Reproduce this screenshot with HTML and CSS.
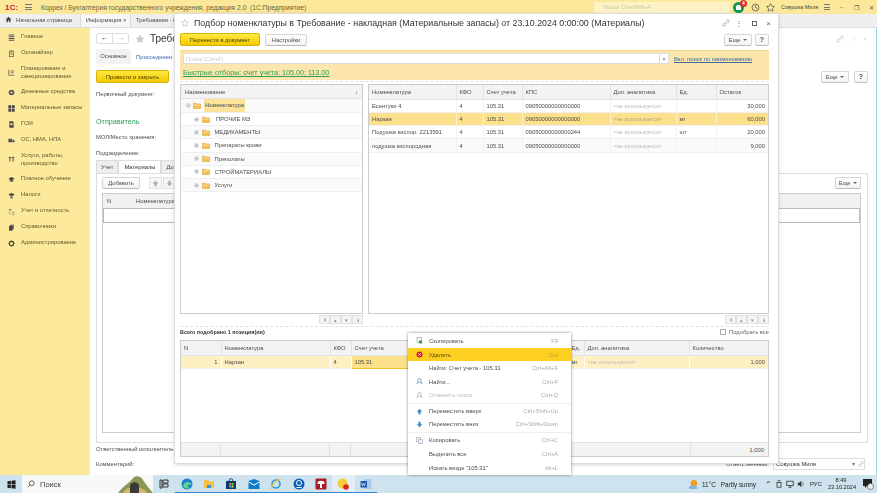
FILE: index.html
```html
<!DOCTYPE html>
<html lang="ru">
<head>
    <meta charset="UTF-8">
    <title>Подбор номенклатуры</title>
    <link rel="stylesheet" href="styles.css">
</head>
<body>
    <svg class="sprite" xmlns="http://www.w3.org/2000/svg">
        <symbol id="folder" viewBox="0 0 10 9"><path d="M0.5 1.5h3l1 1h5v6h-9z" fill="#f3c14f" stroke="#d99a2b" stroke-width=".7"/><path d="M1 4h8" stroke="#fff2c4" stroke-width=".8"/></symbol>
        <symbol id="plus" viewBox="0 0 7 7"><circle cx="3.5" cy="3.5" r="3" fill="#e8e8e8" stroke="#b5b5b5" stroke-width=".6"/><path d="M2 3.5h3M3.5 2v3" stroke="#777" stroke-width=".7"/></symbol>
        <symbol id="minus" viewBox="0 0 7 7"><circle cx="3.5" cy="3.5" r="3" fill="#e8e8e8" stroke="#b5b5b5" stroke-width=".6"/><path d="M2 3.5h3" stroke="#777" stroke-width=".7"/></symbol>
        <symbol id="star" viewBox="0 0 10 10"><path d="M5 .6l1.35 2.9 3.1.4-2.3 2.1.6 3.1L5 7.55 2.25 9.1l.6-3.1L.55 3.9l3.1-.4z"/></symbol>
        <symbol id="chain" viewBox="0 0 10 10"><g fill="none" stroke="#999" stroke-width=".9"><path d="M4.6 3.2l1.6-1.6a1.5 1.5 0 0 1 2.2 2.2L6.800 5.400"/><path d="M5.400 6.800L3.800 8.400a1.500 1.500 0 0 1-2.200-2.200l1.600-1.600"/><path d="M3.800 6.200l2.400-2.400"/></g></symbol>
        <symbol id="up" viewBox="0 0 10 10"><path d="M5 1l4 4.2H6.6V9H3.4V5.2H1z"/></symbol>
        <symbol id="down" viewBox="0 0 10 10"><path d="M5 9L1 4.8h2.4V1h3.2v3.8H9z"/></symbol>
        <symbol id="gear" viewBox="0 0 10 10"><circle cx="5" cy="5" r="3" fill="none" stroke="#4a4a3a" stroke-width="1.6"/><path d="M5 .3v1.6M5 8.1v1.6M.3 5h1.6M8.1 5h1.6M1.7 1.7l1.1 1.1M7.2 7.2l1.1 1.1M8.3 1.7L7.2 2.8M2.8 7.2L1.7 8.3" stroke="#4a4a3a" stroke-width="1"/></symbol>
        <symbol id="copies" viewBox="0 0 10 10"><rect x=".8" y=".8" width="5.5" height="6" fill="#fff" stroke="#99a" stroke-width=".8"/><rect x="3.7" y="3.2" width="5.5" height="6" fill="#eef" stroke="#99a" stroke-width=".8"/></symbol>
        <symbol id="finder" viewBox="0 0 10 10"><circle cx="5" cy="3.6" r="2.7" fill="none" stroke="currentColor" stroke-width="1.1"/><path d="M3 5.7L.9 8.8M7 5.7l2.1 3.1" stroke="currentColor" stroke-width="1.2"/></symbol>
    </svg>

    <header class="app-title">
        <span class="logo">1С:</span>
        <span class="burger"></span>
        <span class="app-name">Коррек / Бухгалтерия государственного учреждения, редакция 2.0&nbsp; (1С:Предприятие)</span>
        <div class="global-search">Поиск Ctrl+Shift+F</div>
        <span class="bell"><b>4</b></span>
        <svg class="top-icon history" viewBox="0 0 10 10"><circle cx="5" cy="5" r="3.8" fill="none" stroke="#555" stroke-width=".9"/><path d="M5 2.6V5l1.8 1" fill="none" stroke="#555" stroke-width=".9"/></svg>
        <svg class="top-icon star-line" viewBox="0 0 10 10"><use href="#star"/></svg>
        <span class="user">Совушка Миля</span>
        <span class="burger small"></span>
        <span class="win-btn">&#8211;</span>
        <span class="win-btn">&#10064;</span>
        <span class="win-btn">&#10005;</span>
    </header>

    <nav class="tabs">
        <span class="tab home"><svg class="home-icon" viewBox="0 0 10 10"><path d="M5 1L.8 5h1.4v4h2V6.400h1.600V9h2V5h1.400z" fill="#444"/></svg>Начальная страница</span>
        <span class="tab info">Информация <i>&times;</i></span>
        <span class="tab req">Требования - н</span>
    </nav>

    <div class="main">
        <aside class="sidebar">
            <div class="side-item"><svg viewBox="0 0 10 10"><path d="M1 1.500h8M1 4h8M1 6.500h8M1 9h8" stroke="#555" stroke-width="1.600"/></svg>Главное</div>
            <div class="side-item"><svg viewBox="0 0 10 10"><rect x="2" y="1.500" width="6" height="8" fill="none" stroke="#555"/><path d="M3.500 4h3M3.500 6h3M4 1h2" stroke="#555"/></svg>Органайзер</div>
            <div class="side-item tall"><svg viewBox="0 0 10 10"><path d="M1 1v8h8" fill="none" stroke="#555"/><circle cx="6" cy="4" r="2" fill="none" stroke="#555"/></svg>Планирование и санкционирование</div>
            <div class="side-item"><svg viewBox="0 0 10 10"><circle cx="5" cy="5" r="4" fill="#555"/><circle cx="5" cy="5" r="1.500" fill="#fde99b"/></svg>Денежные средства</div>
            <div class="side-item"><svg viewBox="0 0 10 10"><path d="M.5 .5h4v4h-4zM5.500 .5h4v4h-4zM.5 5.500h4v4h-4zM5.500 5.500h4v4h-4z" fill="#444"/></svg>Материальные запасы</div>
            <div class="side-item"><svg viewBox="0 0 10 10"><path d="M2 .5h5l1 1.500v7.500H2z" fill="#444"/><rect x="3.500" y="3" width="3" height="3" fill="#fde99b"/></svg>ГСМ</div>
            <div class="side-item"><svg viewBox="0 0 10 10"><path d="M.5 2.500h5.500v5H.5zM6.500 4h2l1 1.500v2h-3z" fill="#555"/></svg>ОС, НМА, НПА</div>
            <div class="side-item tall"><svg viewBox="0 0 10 10"><path d="M1 2h3.500M2.700 2v6M5.500 2h3.500M7.200 2v6" stroke="#444" stroke-width="1.300"/></svg>Услуги, работы, производство</div>
            <div class="side-item"><svg viewBox="0 0 10 10"><path d="M5 1.500L.5 4 5 6.500 9.500 4z" fill="#444"/><path d="M2.500 6v2h5V6" fill="#444"/></svg>Платное обучение</div>
            <div class="side-item"><svg viewBox="0 0 10 10"><path d="M1 2l2 1 2-2 2 2 2-1-1 3.500H2z" fill="#444"/><path d="M3.500 6.500h3V9h-3z" fill="#444"/></svg>Налоги</div>
            <div class="side-item"><svg viewBox="0 0 10 10"><path d="M1 3h4M3 1v2M6 6h3M6 9h3M1 6l3 3" stroke="#444" stroke-width=".9"/></svg>Учет и отчетность</div>
            <div class="side-item"><svg viewBox="0 0 10 10"><path d="M3.500 .8h5v7h-5z" fill="#777"/><path d="M1.500 2.500h5v7h-5z" fill="#444"/></svg>Справочники</div>
            <div class="side-item"><svg viewBox="0 0 10 10"><use href="#gear"/></svg>Администрирование</div>
        </aside>

        <section class="doc">
            <div class="doc-head">
                <div class="nav-btns"><span>&#8592;</span><span class="off">&#8594;</span></div>
                <svg class="doc-star" viewBox="0 0 10 10"><use href="#star"/></svg>
                <h1 class="doc-title">Требо</h1>
                <div class="doc-tools"><svg viewBox="0 0 10 10"><use href="#chain"/></svg><span>&#8942;</span><span>&times;</span></div>
            </div>
            <div class="doc-links"><span class="doc-link-on">Основное</span><span class="doc-link">Присоединен</span></div>
            <div class="doc-actions">
                <button class="btn-yellow">Провести и закрыть</button>
                <div class="right-btns"><button class="btn">Еще <i class="caret"></i></button><button class="btn help">?</button></div>
            </div>
            <div class="field first">Первичный документ:</div>
            <div class="doc-section">Отправитель</div>
            <div class="field">МОЛ/Место хранения:</div>
            <div class="field next">Подразделение:</div>
            <div class="doc-tabs">
                <span class="doc-tab">Учет</span><span class="doc-tab on">Материалы</span><span class="doc-tab">Доп</span>
            </div>
            <div class="tab-panel">
                <div class="panel-tools">
                    <button class="btn add">Добавить</button>
                    <span class="arrow-btns"><span><svg viewBox="0 0 10 10"><use href="#up"/></svg></span><span><svg viewBox="0 0 10 10"><use href="#down"/></svg></span></span>
                    <button class="btn more">Еще <i class="caret"></i></button>
                </div>
                <div class="doc-table">
                    <div class="doc-table-head"><span class="n">N</span><span>Номенклатура</span></div>
                    <div class="doc-table-row"></div>
                </div>
            </div>
            <div class="doc-bottom">
                <div class="field resp">Ответственный исполнитель:</div>
                <div class="comment-row">
                    <span>Комментарий:</span>
                    <span class="resp-right">Ответственный:<span class="resp-input">Совушка Миля<i>&#9662;</i><svg viewBox="0 0 10 10"><use href="#chain"/></svg></span></span>
                </div>
            </div>
        </section>
    </div>

    <footer class="taskbar">
        <svg class="win-logo" viewBox="0 0 10 10"><path d="M.5 1.500l3.800-.6v3.800H.5zM5 .8L9.500 .2v4.500H5zM.5 5.300h3.800v3.800L.5 8.500zM5 5.300h4.500v4.500L5 9.200z" fill="#222"/></svg>
        <div class="task-search">
            <svg viewBox="0 0 10 10"><circle cx="6" cy="4" r="3" fill="none" stroke="#444"/><path d="M3.800 6.200L1 9" stroke="#444"/></svg>
            <span>Поиск</span>
            <svg class="hill" viewBox="0 0 35 18"><path d="M0 18C6 10 12 8 15 3c3-3 8-2 10 2 3 5 7 9 10 13z" fill="#8a9a55"/><path d="M12 18v-7c0-5 9-5 9 0v7z" fill="#3b3b35"/><path d="M5 18c2-4 5-5 7-5v5zM21 13c3 0 6 2 8 5h-8z" fill="#d4b870"/></svg>
        </div>
        <div class="task-icons">
            <span class="task-icon"><svg viewBox="0 0 12 12"><path d="M2 2h2v8H2zM5 2h5v3H5zM5 6h5v3H5z" fill="none" stroke="#333"/></svg></span>
            <span class="task-icon open"><svg viewBox="0 0 12 12"><circle cx="6" cy="6" r="5.500" fill="#1b7fd0"/><path d="M2 8c1-5 8-5 9-1-2-1-5-1-4 2 1 1 3 1 3 1-4 2-7 0-8-2z" fill="#5fd38a"/></svg></span>
            <span class="task-icon open"><svg viewBox="0 0 12 12"><path d="M1 2h4l1 1.500h5V10H1z" fill="#f6c244"/><path d="M4 7h4v3H4z" fill="#3a8fd6"/></svg></span>
            <span class="task-icon open"><svg viewBox="0 0 12 12"><path d="M1 3h10v8H1z" fill="#0f3a66"/><path d="M4 3c0-3 4-3 4 0" fill="none" stroke="#0f3a66"/><path d="M4 5h2v2H4z" fill="#e55"/><path d="M6.500 5h2v2h-2z" fill="#6c4"/><path d="M4 7.500h2v2H4z" fill="#3bd"/><path d="M6.500 7.500h2v2h-2z" fill="#fc3"/></svg></span>
            <span class="task-icon open"><svg viewBox="0 0 12 12"><path d="M.5 3l5.500-2 5.500 2v8H.5z" fill="#0f7cc9"/><path d="M.5 4L6 7l5.500-3" fill="none" stroke="#fff"/></svg></span>
            <span class="task-icon open"><svg viewBox="0 0 12 12"><circle cx="6" cy="6" r="4" fill="none" stroke="#2f9be0" stroke-width="1.600"/><path d="M1 11c1-5 5-9 10-10" fill="none" stroke="#f2c230" stroke-width="1.100"/></svg></span>
            <span class="task-icon open"><svg viewBox="0 0 12 12"><circle cx="6" cy="6" r="5.500" fill="#0a62b8"/><circle cx="6" cy="5" r="2.500" fill="none" stroke="#fff"/><path d="M3.500 9.500h5" stroke="#fff"/></svg></span>
            <span class="task-icon open"><svg viewBox="0 0 12 12"><rect x=".5" y=".5" width="11" height="11" rx="1" fill="#a91d2a"/><path d="M2.500 5c0-3 7-3 7 0v1h-7zM5 6h2v4H5z" fill="#fff"/></svg></span>
            <span class="task-icon active"><svg viewBox="0 0 12 12"><circle cx="5.500" cy="5.500" r="5" fill="#f5cf3b"/><circle cx="9" cy="9" r="2.800" fill="#dd2222"/></svg></span>
            <span class="task-icon open"><svg viewBox="0 0 12 12"><path d="M4 1h7.500v10H4z" fill="#a9c8ee"/><path d="M.5 3h6.500v6.500H.5z" fill="#1a56a8"/><path d="M1.500 4.500l1 3.500 1-2.500 1 2.500 1-3.500" fill="none" stroke="#fff" stroke-width=".6"/></svg></span>
        </div>
        <div class="tray">
            <svg class="weather" viewBox="0 0 12 12"><circle cx="6.500" cy="4.500" r="3.500" fill="#f59a23"/><path d="M1 10c0-3 3-4 5-2 2-1 5 0 4 3H2z" fill="#7cb4e6"/></svg>
            <span class="temp">11°C</span>
            <span class="sunny">Partly sunny</span>
            <span class="chev">&#8963;</span>
            <svg class="tray-icon" viewBox="0 0 10 10"><rect x="2.500" y="3" width="5" height="6" fill="none" stroke="#333"/><path d="M3 1h4" stroke="#333"/></svg>
            <svg class="tray-icon" viewBox="0 0 10 10"><rect x="1" y="1.500" width="8" height="5.500" fill="none" stroke="#333"/><path d="M5 7v2M3 9h4" stroke="#333"/></svg>
            <svg class="tray-icon" viewBox="0 0 10 10"><path d="M1 3.500h2L5.500 1v8L3 6.500H1z" fill="#333"/><path d="M7 3c1 1 1 3 0 4" fill="none" stroke="#333" stroke-width=".8"/></svg>
            <span class="lang">РУС</span>
            <span class="clock">8:49<br>23.10.2024</span>
            <span class="notif"><svg viewBox="0 0 12 12"><path d="M1 1h9v7H5L3 10V8H1z" fill="#222"/><circle cx="8.500" cy="8.500" r="3" fill="#eee" stroke="#444" stroke-width=".6"/></svg></span>
        </div>
    </footer>

    <!-- окно подбора поверх документа -->
    <div class="picker">
        <div class="picker-head">
            <svg class="picker-star" viewBox="0 0 10 10"><use href="#star"/></svg>
            <h2 class="picker-title">Подбор номенклатуры в Требование - накладная (Материальные запасы) от 23.10.2024 0:00:00 (Материалы)</h2>
            <div class="picker-tools"><svg viewBox="0 0 10 10"><use href="#chain"/></svg><span>&#8942;</span><span class="box"></span><span>&times;</span></div>
        </div>
        <div class="picker-actions">
            <button class="btn-yellow move">Перенести в документ</button>
            <button class="btn settings">Настройки</button>
            <div class="right-btns"><button class="btn">Еще <i class="caret"></i></button><button class="btn help">?</button></div>
        </div>
        <div class="filter-panel">
            <div class="filter-top">
                <div class="filter-search">Поиск (Ctrl+F)<i>&times;</i></div>
                <span class="filter-link">Вкл. поиск по наименованию</span>
            </div>
            <div class="filter-quick">Быстрые отборы: счет учета: 105.00; 113.00</div>
        </div>
        <div class="dotted top"></div>
        <div class="lists">
            <div class="list-col tree-col">
                <div class="grid-box">
                    <div class="tree-head">Наименование<span>&#8595;</span></div>
                    <div class="tree-row root"><svg class="ex" viewBox="0 0 7 7"><use href="#minus"/></svg><svg class="fld" viewBox="0 0 10 9"><use href="#folder"/></svg><span class="sel">Номенклатура</span></div>
                    <div class="tree-row"><svg class="ex" viewBox="0 0 7 7"><use href="#plus"/></svg><svg class="fld" viewBox="0 0 10 9"><use href="#folder"/></svg>&nbsp;ПРОЧИЕ МЗ</div>
                    <div class="tree-row"><svg class="ex" viewBox="0 0 7 7"><use href="#plus"/></svg><svg class="fld" viewBox="0 0 10 9"><use href="#folder"/></svg>МЕДИКАМЕНТЫ</div>
                    <div class="tree-row"><svg class="ex" viewBox="0 0 7 7"><use href="#plus"/></svg><svg class="fld" viewBox="0 0 10 9"><use href="#folder"/></svg>Препараты крови</div>
                    <div class="tree-row"><svg class="ex" viewBox="0 0 7 7"><use href="#plus"/></svg><svg class="fld" viewBox="0 0 10 9"><use href="#folder"/></svg>Преполаты</div>
                    <div class="tree-row"><svg class="ex" viewBox="0 0 7 7"><use href="#plus"/></svg><svg class="fld" viewBox="0 0 10 9"><use href="#folder"/></svg>СТРОЙМАТЕРИАЛЫ</div>
                    <div class="tree-row"><svg class="ex" viewBox="0 0 7 7"><use href="#plus"/></svg><svg class="fld" viewBox="0 0 10 9"><use href="#folder"/></svg>Услуги</div>
                </div>
                <div class="pager"><span>&#8607;</span><span>&#9652;</span><span>&#9662;</span><span>&#8609;</span></div>
            </div>
            <div class="list-col goods-col">
                <div class="grid-box">
                    <table class="grid goods">
                        <colgroup><col class="c-name"><col class="c-kfo"><col class="c-acc"><col class="c-kps"><col class="c-an"><col class="c-ed"><col></colgroup>
                        <tr><th>Номенклатура</th><th>КФО</th><th>Счет учета</th><th>КПС</th><th>Доп. аналитика</th><th>Ед.</th><th>Остаток</th></tr>
                        <tr><td>Есентуки 4</td><td>4</td><td>105.31</td><td>09050000000000000</td><td class="muted">&lt;не используется&gt;</td><td></td><td class="num">30,000</td></tr>
                        <tr class="hl"><td>Нарзан</td><td>4</td><td>105.31</td><td>09050000000000000</td><td class="muted">&lt;не используется&gt;</td><td>мг</td><td class="num">60,000</td></tr>
                        <tr><td>Подушка кислор. 2213591</td><td>4</td><td>105.31</td><td>09050000000000244</td><td class="muted">&lt;не используется&gt;</td><td>шт</td><td class="num">20,000</td></tr>
                        <tr><td>подушка кислородная</td><td>4</td><td>105.31</td><td>09050000000000000</td><td class="muted">&lt;не используется&gt;</td><td></td><td class="num">9,000</td></tr>
                    </table>
                </div>
                <div class="pager"><span>&#8607;</span><span>&#9652;</span><span>&#9662;</span><span>&#8609;</span></div>
            </div>
        </div>
        <div class="dotted"></div>
        <div class="picked-bar"><b>Всего подобрано 1 позиция(ии)</b><label class="pick-all"><i class="check"></i>Подобрать все</label></div>
        <div class="grid-box picked">
            <table class="grid">
                <colgroup><col class="p-n"><col class="p-name"><col class="p-kfo"><col class="p-acc"><col class="p-ed"><col class="p-an"><col></colgroup>
                <tr><th>N</th><th>Номенклатура</th><th>КФО</th><th>Счет учета</th><th>Ед.</th><th>Доп. аналитика</th><th>Количество</th></tr>
                <tr class="hl-soft"><td class="num">1</td><td>Нарзан</td><td>4</td><td class="cell-sel">105.31</td><td>мг</td><td class="muted">&lt;не используется&gt;</td><td class="num">1,000</td></tr>
            </table>
            <div class="picked-foot"><span class="c1"></span><span class="c2"></span><span class="c3"></span><span class="c4"></span><span class="c5">1,000</span></div>
        </div>
    </div>

    <!-- контекстное меню -->
    <ul class="menu">
        <li><svg viewBox="0 0 10 10"><rect x="1.500" y="1" width="6" height="7" fill="#fff" stroke="#889" stroke-width=".8"/><circle cx="6.500" cy="7" r="2.500" fill="#3a9a3a"/></svg>Скопировать<kbd>F9</kbd></li>
        <li class="active"><svg viewBox="0 0 10 10"><circle cx="5" cy="5" r="4.300" fill="#d9202c"/><path d="M3.300 3.300l3.400 3.400M6.700 3.300L3.300 6.700" stroke="#fff" stroke-width="1.100"/></svg>Удалить<kbd>Del</kbd></li>
        <li><span class="no-icon"></span>Найти: Счет учета - 105.31<kbd>Ctrl+Alt+F</kbd></li>
        <li><svg class="find" viewBox="0 0 10 10"><use href="#finder"/></svg>Найти...<kbd>Ctrl+F</kbd></li>
        <li class="disabled sep"><svg class="find-off" viewBox="0 0 10 10"><use href="#finder"/></svg>Отменить поиск<kbd>Ctrl+Q</kbd></li>
        <li><svg class="arrow" viewBox="0 0 10 10"><use href="#up"/></svg>Переместить вверх<kbd>Ctrl+Shift+Up</kbd></li>
        <li class="sep"><svg class="arrow" viewBox="0 0 10 10"><use href="#down"/></svg>Переместить вниз<kbd>Ctrl+Shift+Down</kbd></li>
        <li><svg viewBox="0 0 10 10"><use href="#copies"/></svg>Копировать<kbd>Ctrl+C</kbd></li>
        <li><span class="no-icon"></span>Выделить все<kbd>Ctrl+A</kbd></li>
        <li><span class="no-icon"></span>Искать везде "105.31"<kbd>Alt+L</kbd></li>
    </ul>
</body>
</html>
```

FILE: styles.css
```css
* {
    box-sizing: border-box;
}
body {
    margin: 0;
    width: 877px;
    height: 493px;
    overflow: hidden;
    display: flex;
    flex-direction: column;
    font-family: "Liberation Sans", Arial, sans-serif;
    font-size: 5.8px;
    color: #4c4c4c;
    background: #fff;
    filter: blur(0.3px);
}
.sprite {
    position: absolute;
    width: 0;
    height: 0;
}
button {
    font-family: inherit;
    font-size: 5.8px;
    color: #4c4c4c;
    cursor: pointer;
    padding: 0;
}
.btn {
    height: 12px;
    background: linear-gradient(#fff, #f3f3f3);
    border: 1px solid #d5d5d5;
    border-bottom-color: #bbb;
    border-radius: 2px;
}
.btn-yellow {
    height: 13px;
    background: linear-gradient(#ffe940, #f5c900);
    border: 1px solid #d8b200;
    border-radius: 2px;
    color: #4a4200;
}
.caret {
    display: inline-block;
    border: 2px solid transparent;
    border-top-color: #666;
    border-bottom: 0;
    vertical-align: 1px;
    margin-left: 1px;
}
.right-btns {
    margin-left: auto;
    display: flex;
    gap: 5px;
}
.help {
    width: 14px;
    font-weight: bold;
    font-size: 7px;
}

/* верхняя полоса */
.app-title {
    height: 14px;
    flex: none;
    display: flex;
    align-items: center;
    background: #fbe89a;
    color: #6a6436;
    font-size: 6.7px;
}
.app-title > * {
    flex: none;
}
.logo {
    width: 16px;
    margin-left: 5px;
    color: #d3202a;
    font-weight: bold;
    font-size: 8px;
}
.burger {
    width: 7px;
    height: 6px;
    margin-left: 4px;
    border-top: 1px solid #777;
    border-bottom: 1px solid #777;
    position: relative;
}
.burger::after {
    content: "";
    position: absolute;
    left: 0;
    right: 0;
    top: 1.5px;
    border-top: 1px solid #777;
}
.burger.small {
    margin-left: 9px;
    width: 6px;
}
.app-name {
    margin-left: 9px;
    width: 553px;
    white-space: nowrap;
}
.global-search {
    width: 136px;
    height: 11px;
    padding-left: 9px;
    line-height: 11px;
    font-size: 5.8px;
    background: #fdf3c6;
    color: #cbc6a2;
}
.bell {
    width: 11px;
    height: 11px;
    margin-left: 3px;
    border-radius: 50%;
    background: #12955a;
    position: relative;
}
.bell::before {
    content: "";
    position: absolute;
    left: 3px;
    top: 3px;
    width: 5px;
    height: 5px;
    border-radius: 2px 2px 0 0;
    background: #fff;
}
.bell b {
    position: absolute;
    right: -3px;
    top: -2px;
    width: 7px;
    height: 7px;
    border-radius: 50%;
    background: #e02b2b;
    color: #fff;
    font-size: 5px;
    line-height: 7px;
    text-align: center;
}
.top-icon {
    width: 9px;
    height: 9px;
    margin-left: 7px;
}
.star-line {
    margin-left: 6px;
    fill: #fbe89a;
    stroke: #555;
    stroke-width: 0.8;
}
.user {
    margin-left: 6px;
    width: 34px;
    font-size: 5.4px;
    color: #444;
    white-space: nowrap;
}
.win-btn {
    width: 15px;
    text-align: center;
    font-size: 6px;
    color: #555;
}
.burger + .win-btn {
    margin-left: 4px;
}

/* вкладки */
.tabs {
    height: 14px;
    flex: none;
    display: flex;
    background: #efefef;
    border-bottom: 1px solid #ddd;
    line-height: 13px;
}
.tab {
    white-space: nowrap;
    border-right: 1px solid #d8d8d8;
    padding-left: 5px;
}
.tab i {
    font-style: normal;
}
.tab.home {
    width: 81px;
}
.home-icon {
    width: 7px;
    height: 7px;
    margin-right: 4px;
    vertical-align: -1px;
}
.tab.info {
    width: 50px;
    background: #f7f7f7;
}
.tab.req {
    width: 60px;
}

/* боковая панель */
.main {
    flex: 1;
    display: flex;
    min-height: 0;
}
.sidebar {
    width: 90px;
    flex: none;
    padding-top: 1px;
    background: #fde99b;
    color: #5f5a2e;
}
.side-item {
    height: 16px;
    padding: 0 4px 0 8px;
    display: flex;
    align-items: center;
    gap: 6px;
    line-height: 7.6px;
}
.side-item.tall {
    height: 23px;
}
.side-item svg {
    width: 7px;
    height: 7px;
    flex: none;
}

/* документ под окном подбора */
.doc {
    flex: 1;
    min-width: 0;
    padding: 5px 0 0 6px;
    display: flex;
    flex-direction: column;
    border-right: 1px solid #9cd3ea;
    overflow: hidden;
}
.doc-head {
    height: 11px;
    display: flex;
    align-items: center;
}
.nav-btns {
    display: flex;
    width: 33px;
    height: 11px;
    border: 1px solid #ddd;
    border-radius: 2px;
    line-height: 8px;
    font-size: 8px;
    text-align: center;
    color: #333;
}
.nav-btns span {
    flex: 1;
}
.nav-btns .off {
    color: #aaa;
    border-left: 1px solid #ddd;
}
.doc-star {
    width: 10px;
    height: 10px;
    margin-left: 6px;
    fill: #c9c9c9;
}
.doc-title {
    margin: 0 0 0 5px;
    font-size: 10px;
    font-weight: normal;
    color: #333;
}
.doc-tools {
    margin-left: auto;
    margin-right: 9px;
    display: flex;
    align-items: center;
    gap: 7px;
    color: #bbb;
    opacity: 0.7;
}
.doc-tools svg {
    width: 8px;
    height: 8px;
}
.doc-links {
    margin-top: 5px;
    height: 15px;
    display: flex;
    align-items: center;
}
.doc-link-on {
    width: 35px;
    height: 15px;
    line-height: 15px;
    text-align: center;
    background: #f2f2f2;
}
.doc-link {
    margin-left: 5px;
    color: #3c6db0;
    white-space: nowrap;
}
.doc-actions {
    margin-top: 6px;
    padding-right: 8px;
    display: flex;
    align-items: center;
}
.doc-actions .btn-yellow {
    width: 73px;
}
.doc-actions .btn {
    width: 28px;
}
.doc-actions .help {
    width: 14px;
}
.field {
    line-height: 8px;
}
.field.first {
    margin-top: 7px;
}
.field.next {
    margin-top: 8px;
}
.doc-section {
    margin: 19px 0 6px;
    font-size: 7.2px;
    line-height: 10px;
    color: #2f9e56;
}
.doc-tabs {
    margin-top: 3px;
    display: flex;
    height: 13px;
    line-height: 13px;
}
.doc-tab {
    padding: 0 4px;
    background: #eee;
    border: 1px solid #ddd;
    border-bottom: 0;
    white-space: nowrap;
}
.doc-tab.on {
    background: #fff;
    color: #333;
    padding: 0 5px;
}
.tab-panel {
    height: 270px;
    padding: 3px 6px 0 5px;
    margin-right: 8px;
    border: 1px solid #ddd;
}
.panel-tools {
    display: flex;
    align-items: center;
}
.add {
    width: 38px;
}
.arrow-btns {
    margin-left: 9px;
    display: flex;
    gap: 1px;
    fill: #aaa;
}
.arrow-btns span {
    width: 13px;
    height: 12px;
    display: flex;
    align-items: center;
    justify-content: center;
    background: #f6f6f6;
    border: 1px solid #e2e2e2;
}
.arrow-btns svg {
    width: 7px;
    height: 7px;
}
.more {
    margin-left: auto;
    width: 26px;
}
.doc-table {
    margin-top: 4px;
    height: 240px;
    border: 1px solid #ccc;
}
.doc-table-head {
    height: 14px;
    background: #f1f1f1;
    display: flex;
    line-height: 14px;
    padding-left: 4px;
}
.doc-table-head .n {
    width: 29px;
}
.doc-table-row {
    height: 15px;
    border: 1px solid #bbb;
}
.doc-bottom {
    margin-top: auto;
    padding-bottom: 5px;
    padding-right: 11px;
}
.field.resp {
    margin-bottom: 5px;
}
.comment-row {
    display: flex;
    justify-content: space-between;
    align-items: center;
    height: 12px;
}
.resp-right {
    display: flex;
    align-items: center;
    gap: 4px;
}
.resp-input {
    width: 92px;
    height: 12px;
    padding-left: 2px;
    line-height: 11px;
    border: 1px solid #ddd;
    display: flex;
    color: #333;
    align-items: center;
    gap: 3px;
}
.resp-input i {
    margin-left: auto;
    font-style: normal;
    color: #777;
}
.resp-input svg {
    width: 6px;
    height: 6px;
}

/* панель задач */
.taskbar {
    height: 18px;
    flex: none;
    display: flex;
    align-items: center;
    background: #cfe3ef;
    color: #222;
}
.win-logo {
    width: 9px;
    height: 9px;
    margin-left: 7px;
}
.task-search {
    width: 131px;
    height: 18px;
    margin-left: 6px;
    padding-left: 5px;
    display: flex;
    align-items: center;
    gap: 5px;
    background: #f7f8f8;
    font-size: 7.5px;
    color: #444;
}
.task-search svg {
    width: 8px;
    height: 8px;
}
.task-search .hill {
    width: 35px;
    height: 18px;
    margin-left: auto;
}
.task-icons {
    display: flex;
}
.task-icon {
    width: 22.4px;
    height: 18px;
    display: flex;
    align-items: center;
    justify-content: center;
    border-bottom: 1px solid transparent;
}
.task-icon svg {
    width: 12px;
    height: 12px;
}
.task-icon.open {
    border-bottom-color: #2d86d0;
}
.task-icon.active {
    background: #e3eef5;
    border-bottom-color: #2d86d0;
}
.tray {
    margin-left: auto;
    margin-right: 3px;
    display: flex;
    align-items: center;
}
.weather {
    width: 11px;
    height: 11px;
}
.temp {
    margin-left: 3px;
    font-size: 6.4px;
}
.sunny {
    margin-left: 5px;
    font-size: 6.4px;
}
.chev {
    margin-left: 9px;
    font-size: 8px;
}
.tray-icon {
    width: 8px;
    height: 8px;
    margin-left: 3px;
}
.lang {
    margin-left: 5px;
    font-size: 6px;
}
.clock {
    margin-left: 6px;
    width: 26px;
    font-size: 5.6px;
    line-height: 7.5px;
    text-align: center;
}
.notif {
    margin-left: 8px;
    width: 12px;
    height: 12px;
}
.notif svg {
    width: 12px;
    height: 12px;
}

/* окно подбора */
.picker {
    position: absolute;
    left: 175px;
    top: 14px;
    width: 603px;
    height: 449px;
    padding: 0 9px 0 5px;
    display: flex;
    flex-direction: column;
    background: #fff;
    box-shadow: 0 0 0 1px #ddd, 0 1px 4px rgba(0, 0, 0, 0.25);
}
.picker-head {
    height: 18px;
    flex: none;
    display: flex;
    align-items: center;
}
.picker-star {
    width: 8px;
    height: 8px;
    margin-left: 1px;
    fill: #fff;
    stroke: #bbb;
    stroke-width: 0.8;
}
.picker-title {
    margin: 0 0 0 5px;
    font-size: 8.85px;
    font-weight: normal;
    color: #333;
    white-space: nowrap;
}
.picker-tools {
    margin-left: auto;
    margin-right: -2px;
    display: flex;
    align-items: center;
    gap: 9px;
    color: #666;
    font-size: 8px;
}
.picker-tools svg {
    width: 8px;
    height: 8px;
    margin-right: -4px;
}
.picker-tools .box {
    width: 5px;
    height: 5px;
    border: 1px solid #666;
}
.picker-actions {
    height: 13px;
    flex: none;
    margin-top: 1px;
    display: flex;
    align-items: center;
    gap: 5px;
}
.picker-actions .move {
    width: 80px;
}
.picker-actions .settings {
    width: 42px;
}
.picker-actions .right-btns {
    gap: 3px;
}
.picker-actions .right-btns .btn {
    width: 28px;
}
.picker-actions .right-btns .help {
    width: 14px;
}
.filter-panel {
    height: 30px;
    flex: none;
    margin-top: 4px;
    padding: 2px 0 0 3px;
    background: #fde6ad;
    border-top: 1px solid #f5d588;
}
.filter-top {
    display: flex;
    align-items: center;
}
.filter-search {
    width: 486px;
    height: 11px;
    padding-left: 2px;
    display: flex;
    justify-content: space-between;
    line-height: 10px;
    background: #fff;
    border: 1px solid #ddd;
    color: #ccc;
}
.filter-search i {
    width: 9px;
    text-align: center;
    font-style: normal;
    color: #666;
    border-left: 1px solid #ddd;
}
.filter-link {
    margin-left: 5px;
    color: #3e6a9e;
    text-decoration: underline;
    white-space: nowrap;
}
.filter-quick {
    margin-top: 4px;
    font-size: 7.2px;
    line-height: 10px;
    color: #2f9e56;
    text-decoration: underline;
}
.dotted {
    height: 1px;
    flex: none;
    margin-top: 1px;
    border-top: 1px dashed #e2e2e2;
}
.dotted.top {
    margin-bottom: 2px;
}
.lists {
    flex: none;
    display: flex;
    gap: 5px;
}
.list-col {
    height: 241px;
    display: flex;
    flex-direction: column;
}
.tree-col {
    width: 183px;
}
.goods-col {
    width: 401px;
}
.grid-box {
    flex: 1;
    border: 1px solid #ccc;
    min-height: 0;
}
.tree-head {
    height: 14px;
    padding: 0 4px;
    display: flex;
    justify-content: space-between;
    line-height: 14px;
    background: #f3f3f3;
    border-bottom: 1px solid #e3e3e3;
}
.tree-row {
    height: 13.2px;
    padding-left: 12.5px;
    display: flex;
    align-items: center;
    white-space: nowrap;
    border-bottom: 1px solid #efefef;
}
.tree-row.root {
    padding-left: 4.5px;
    height: 14px;
}
.tree-row .ex {
    width: 5px;
    height: 5px;
    flex: none;
}
.tree-row .fld {
    width: 8px;
    height: 7px;
    flex: none;
    margin: 0 5px 0 3px;
}
.tree-row.root .fld {
    margin: 0 3px 0 2.5px;
}
.tree-row:nth-child(even) {
    background: #fafafa;
}
.sel {
    height: 13px;
    padding: 0 1px;
    line-height: 13px;
    background: #fde39a;
}
.pager {
    height: 10px;
    margin-top: 1px;
    display: flex;
    justify-content: flex-end;
}
.pager span {
    width: 11px;
    height: 9px;
    line-height: 8px;
    text-align: center;
    font-size: 5px;
    color: #888;
    background: #f4f4f4;
    border: 1px solid #e0e0e0;
}
.grid {
    width: 100%;
    table-layout: fixed;
    border-collapse: collapse;
}
.c-name { width: 87px; }
.c-kfo { width: 27px; }
.c-acc { width: 39px; }
.c-kps { width: 88px; }
.c-an { width: 66px; }
.c-ed { width: 40px; }
.p-n { width: 40px; }
.p-name { width: 109px; }
.p-kfo { width: 21px; }
.p-acc { width: 217px; }
.p-ed { width: 16px; }
.p-an { width: 105px; }
.grid th {
    height: 14px;
    padding: 0 3px;
    font-weight: normal;
    text-align: left;
    background: #f3f3f3;
    border-right: 1px solid #e3e3e3;
    border-bottom: 1px solid #e3e3e3;
    white-space: nowrap;
    overflow: hidden;
}
.grid td {
    height: 13.3px;
    padding: 0 3px;
    border-right: 1px solid #f2f2f2;
    border-bottom: 1px solid #efefef;
    white-space: nowrap;
    overflow: hidden;
}
.grid th:last-child,
.grid td:last-child {
    border-right: 0;
}
.grid tr:nth-child(5) td {
    background: #fafafa;
}
.grid .num {
    text-align: right;
}
.grid .muted {
    color: #bbb;
    font-size: 5.6px;
}
.grid .hl td {
    background: #fde08c;
    border-right-color: #fff3cf;
}
.grid .hl .muted {
    color: #b5a677;
}
.grid .hl-soft td {
    background: #fdf1c3;
    border-right-color: #fff;
}
.grid .hl-soft .cell-sel {
    background: #fde18a;
    border: 1px solid #f0c030;
}
.picked-bar {
    height: 10px;
    flex: none;
    display: flex;
    align-items: center;
    justify-content: space-between;
    font-size: 5.4px;
    color: #333;
}
.pick-all {
    display: flex;
    align-items: center;
    gap: 3px;
    color: #666;
    font-size: 5.8px;
}
.check {
    width: 6px;
    height: 6px;
    background: #fff;
    border: 1px solid #aaa;
}
.picked {
    flex: none;
    height: 117px;
    margin-top: 3px;
    position: relative;
}
.picked-foot {
    position: absolute;
    left: 0;
    right: 0;
    bottom: 0;
    height: 14px;
    display: flex;
    line-height: 14px;
    background: #f3f3f3;
    border-top: 1px solid #e3e3e3;
}
.picked-foot span {
    border-right: 1px solid #e3e3e3;
}
.picked-foot .c1 {
    width: 40px;
}
.picked-foot .c2 {
    width: 109px;
}
.picked-foot .c3 {
    width: 21px;
}
.picked-foot .c4 {
    flex: 1;
}
.picked-foot .c5 {
    width: 77px;
    padding-right: 4px;
    text-align: right;
    border-right: 0;
}

/* контекстное меню */
.menu {
    position: absolute;
    left: 408px;
    top: 333px;
    width: 163px;
    height: 142px;
    margin: 0;
    padding: 1px 0;
    list-style: none;
    background: #fff;
    box-shadow: 0 0 3px rgba(0, 0, 0, 0.45);
}
.menu li {
    height: 13.7px;
    padding: 0 13px 0 8px;
    display: flex;
    align-items: center;
    color: #4c4c4c;
    white-space: nowrap;
}
.menu li svg,
.no-icon {
    width: 7px;
    height: 7px;
    flex: none;
    margin-right: 6px;
}
.menu kbd {
    margin-left: auto;
    font-family: inherit;
    font-size: 5.8px;
    color: #aaa;
}
.menu .active {
    background: #fccf22;
    color: #5a4a00;
}
.menu .active kbd {
    color: #c9a322;
}
.menu .disabled {
    color: #bbb;
}
.menu .sep {
    height: 15.5px;
    padding-bottom: 2px;
    border-bottom: 1.5px solid #eee;
}
.find {
    color: #4f90c8;
}
.find-off {
    color: #aaa;
}
.arrow {
    fill: #2f8fd0;
}
```
